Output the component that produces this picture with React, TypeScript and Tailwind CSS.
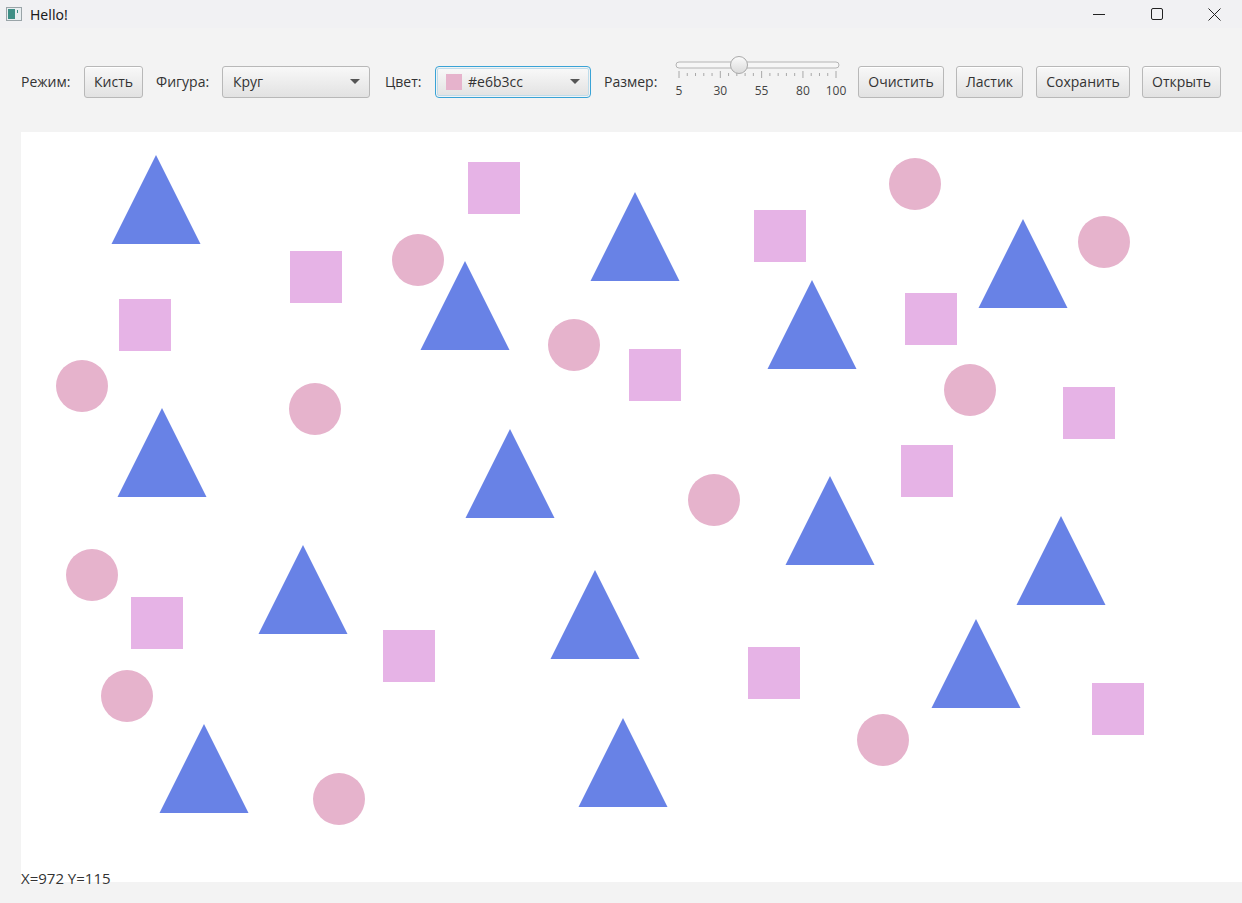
import React from 'react';

const triangles: [number, number][] = [
  [155, 155], [634, 192], [464, 261], [811, 280], [1022, 219], [161, 408], [509, 429],
  [829, 476], [302, 545], [594, 570], [1060, 516], [975, 619], [203, 724], [622, 718],
];

const squares: [number, number][] = [
  [468, 162], [290, 251], [119, 299], [754, 210], [905, 293], [629, 349],
  [1063, 387], [901, 445], [131, 597], [383, 630], [748, 647], [1092, 683],
];

const circles: [number, number][] = [
  [915, 184], [1104, 242], [418, 260], [574, 345], [82, 386], [315, 409],
  [970, 390], [714, 500], [92, 575], [127, 696], [883, 740], [339, 799],
];

// canvas origin on screen
const OX = 21;
const OY = 132;

const FxButton = ({ label, w }: { label: string; w: string }) => (
  <button
    className={`h-[32px] ${w} shrink-0 rounded-[3px] border border-[#b8b8b8] bg-gradient-to-b from-[#f8f8f8] to-[#e2e2e2] text-[14px] text-[#333] shadow-[inset_0_1px_0_#fff]`}
  >
    {label}
  </button>
);

const Arrow = () => (
  <svg width="10" height="6" viewBox="0 0 10 6" className="shrink-0">
    <path d="M0 0 L10 0 L5 5 Z" fill="#555" />
  </svg>
);

const Slider = () => {
  const x0 = 4;
  const x1 = 161;
  const pos = (v: number) => x0 + ((v - 5) / 95) * (x1 - x0);
  const ticks: number[] = [];
  for (let v = 5; v <= 100; v += 5) ticks.push(v);
  const majors = [5, 30, 55, 80, 100];
  return (
    <svg width="175" height="42" viewBox="0 0 175 42" className="shrink-0 ml-[17px]">
      <rect x="1" y="6" width="163" height="6" rx="3" fill="#f6f6f6" stroke="#b4b4b4" />
      {ticks.map((v) => (
        <line
          key={v}
          x1={pos(v)}
          x2={pos(v)}
          y1={majors.includes(v) ? 15 : 17}
          y2={majors.includes(v) ? 22 : 20}
          stroke="#a8a8a8"
          strokeWidth="1"
        />
      ))}
      <defs>
        <linearGradient id="thumb" x1="0" y1="0" x2="0" y2="1">
          <stop offset="0" stopColor="#fbfbfb" />
          <stop offset="1" stopColor="#dadada" />
        </linearGradient>
      </defs>
      <circle cx="64" cy="9" r="8.5" fill="url(#thumb)" stroke="#a9a9a9" />
      {majors.map((v) => (
        <text
          key={v}
          x={pos(v)}
          y="39"
          textAnchor="middle"
          fontSize="12"
          fill="#444"
          fontFamily="'Open Sans', sans-serif"
        >
          {v}
        </text>
      ))}
    </svg>
  );
};

const App = () => {
  return (
    <div className="w-[1242px] h-[903px] bg-[#f3f3f3] overflow-hidden font-['Open_Sans',sans-serif] text-[#333]">
      {/* title bar */}
      <div className="h-[28px] flex items-center bg-[#f1f1f3]">
        <svg width="16" height="14" viewBox="0 0 16 14" className="ml-[6px]">
          <rect x="0.5" y="0.5" width="15" height="13" fill="#e8eef0" stroke="#9aa4a8" />
          <rect x="2" y="2" width="7" height="10" fill="#3e8f86" />
          <rect x="11" y="3" width="1" height="3" fill="#3e8f86" />
        </svg>
        <span className="ml-[8px] text-[14px] text-[#1b1b1b] font-['Noto_Sans',sans-serif]">Hello!</span>
        <div className="ml-auto flex items-center h-full">
          <div className="w-[58px] flex justify-center">
            <svg width="12" height="12" viewBox="0 0 12 12">
              <line x1="0" y1="6.5" x2="12" y2="6.5" stroke="#222" strokeWidth="1" />
            </svg>
          </div>
          <div className="w-[58px] flex justify-center">
            <svg width="12" height="12" viewBox="0 0 12 12">
              <rect x="0.5" y="0.5" width="11" height="11" rx="1.5" fill="none" stroke="#222" strokeWidth="1" />
            </svg>
          </div>
          <div className="w-[56px] flex justify-center">
            <svg width="13" height="13" viewBox="0 0 13 13">
              <path d="M0.5 0.5 L12.5 12.5 M12.5 0.5 L0.5 12.5" stroke="#222" strokeWidth="1" />
            </svg>
          </div>
        </div>
      </div>

      {/* toolbar */}
      <div className="h-[104px] flex items-center pl-[21px] pt-[3px] text-[14px]">
        <span className="w-[50px]">Режим:</span>
        <div className="ml-[13px]">
          <FxButton label="Кисть" w="w-[59px]" />
        </div>
        <span className="ml-[13px] w-[53px]">Фигура:</span>
        <div className="ml-[13px] w-[148px] h-[32px] rounded-[3px] border border-[#b8b8b8] bg-gradient-to-b from-[#f8f8f8] to-[#e2e2e2] flex items-center pl-[10px] pr-[9px]">
          <span>Круг</span>
          <div className="ml-auto">
            <Arrow />
          </div>
        </div>
        <span className="ml-[15px] w-[37px]">Цвет:</span>
        <div className="ml-[13px] w-[156px] h-[32px] rounded-[4px] border border-[#39a3d6] p-[1px]">
          <div className="h-full rounded-[2px] border border-[#bfdcea] bg-gradient-to-b from-[#f8f8f8] to-[#e3e3e3] flex items-center pl-[8px] pr-[8px]">
            <div className="w-[16px] h-[16px] bg-[#e6b3cc]" />
            <span className="ml-[6px]">#e6b3cc</span>
            <div className="ml-auto">
              <Arrow />
            </div>
          </div>
        </div>
        <span className="ml-[13px] w-[54px]">Размер:</span>
        <div className="mb-[10px]">
          <Slider />
        </div>
        <div className="ml-[8px]">
          <FxButton label="Очистить" w="w-[86px]" />
        </div>
        <div className="ml-[12px]">
          <FxButton label="Ластик" w="w-[67px]" />
        </div>
        <div className="ml-[13px]">
          <FxButton label="Сохранить" w="w-[94px]" />
        </div>
        <div className="ml-[12px]">
          <FxButton label="Открыть" w="w-[79px]" />
        </div>
      </div>

      {/* canvas */}
      <div className="ml-[21px] w-[1221px] h-[750px] bg-white">
        <svg width="1221" height="750" viewBox="0 0 1221 750">
          {squares.map(([x, y], i) => (
            <rect key={`s${i}`} x={x - OX} y={y - OY} width="52" height="52" fill="#e6b3e6" />
          ))}
          {circles.map(([x, y], i) => (
            <circle key={`c${i}`} cx={x - OX} cy={y - OY} r="26" fill="#e6b3cc" />
          ))}
          {triangles.map(([x, y], i) => {
            const ax = x - OX + 1;
            const ay = y - OY;
            return (
              <polygon
                key={`t${i}`}
                points={`${ax},${ay} ${ax - 44.5},${ay + 89} ${ax + 44.5},${ay + 89}`}
                fill="#6882e6"
              />
            );
          })}
        </svg>
      </div>

      {/* status */}
      <div className="relative -mt-[14px] pl-[21px] text-[15px] text-[#333] leading-[20px]">X=972 Y=115</div>
    </div>
  );
};

export default App;
